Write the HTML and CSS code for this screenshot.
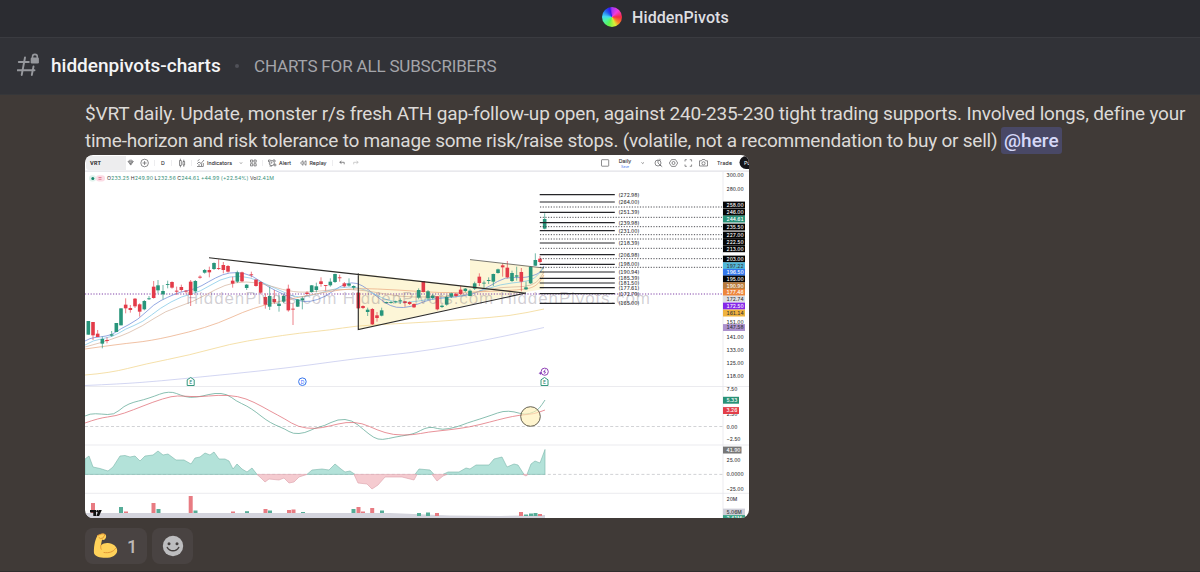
FILE: index.html
```html
<!DOCTYPE html>
<html lang="en">
<head>
<meta charset="utf-8">
<title>HiddenPivots</title>
<link rel="stylesheet" href="styles.css">
</head>
<body>
<header class="server"><span class="wheel"></span><span class="server-name">HiddenPivots</span></header>
<div class="channel">
  <svg class="hash" viewBox="0 0 24 24" width="24" height="24"><path d="M8 4.5 4.7 22M16.5 13.5 14.8 22M1.8 9h10M.5 17.3h17" fill="none" stroke="#96989d" stroke-width="1.9" stroke-linecap="round"/><path d="M15.5 5V3.8a2.4 2.4 0 0 1 4.8 0V5" fill="none" stroke="#96989d" stroke-width="1.6"/><rect x="13.7" y="4.5" width="8.2" height="6" rx="1.2" fill="#96989d"/></svg>
  <h1 class="channel-name">hiddenpivots-charts</h1>
  <span class="dot"></span>
  <span class="topic">CHARTS FOR ALL SUBSCRIBERS</span>
</div>
<main class="message">
  <p class="text"><span class="line first">$VRT daily. Update, monster r/s fresh ATH gap-follow-up open, against 240-235-230 tight trading supports. Involved longs, define your</span><br><span class="line">time-horizon and risk tolerance to manage some risk/raise stops. (volatile, not a recommendation to buy or sell)</span> <span class="mention">@here</span></p>
  <section class="attachment">
    <svg id="chart" class="chart" viewBox="85 155 664 363" width="664" height="363">
      <g class="toolbar">
        <path d="M89 156h37v14H89q-3 0-3-3v-8q0-3 3-3" fill="#ededee"/>
        <text x="90" y="165.1" textLength="11" class="strong">VRT</text>
        <g class="ico">
          <path d="M128.2 161.5l1.3-1.3h2.4l1.3 1.3-2.5 3.6zM128.2 161.7h5M129.7 161.7l1 2.5 1-2.5"/>
          <circle cx="144.6" cy="163" r="3.8"/><path d="M142.6 163h4M144.6 161v4"/>
          <path d="M179.5 160.5h1.8v5h-1.8zM180.4 158.7v1.8M180.4 165.5v1.8M183 161.5h1.6v3.5H183zM183.8 159.7v1.8M183.8 165v1.8"/>
          <path d="M197 166.5h6.5M197 164l2-2 2 1.5 3-3.5M197.5 161l2-1.5M199 166v-2M201.5 166v-2.5M203.3 166v-3"/>
          <path d="M240 162.5l1 1 1-1M250.5 160h2.2v2.2h-2.2zM254 160h2.2v2.2H254zM250.5 163.7h2.2v2.2h-2.2zM254 163.7h2.2v2.2H254z"/>
          <path d="M268.5 160v2M268.5 160h2M275 160v2M275 160h-2M269.5 166h2.5M273.5 165h3M275 163.5v3"/><circle cx="271.8" cy="163" r="2.6"/><path d="M271.8 161.3v1.8h-1.5"/>
          <path d="M303 160.7v4.6l-2.5-2.3zM306 160.7v4.6l-2.5-2.3zM341.5 161l-1.8 1.3 1.8 1.3M339.9 162.3h4.3v2"/>
          <path class="pale" d="M356.5 161l1.8 1.3-1.8 1.3M358 162.3h-4.3v2"/>
          <rect x="601.5" y="159.7" width="7.2" height="6.5" rx=".5"/><path d="M641.5 162.5l1.2 1 1.2-1"/>
          <circle cx="658" cy="163" r="3"/><path d="M660.2 165.2l2 1.5M658 160v3l3 3M659.5 158.8l1 1.4"/>
          <path d="M671.5 159.6h4l2.2 3.4-2.2 3.4h-4l-2.2-3.4z"/><circle cx="673.5" cy="163" r="1.5"/>
          <path d="M685 161.5v-1.8h1.8M689.8 159.7h1.8v1.8M685 164.5v1.8h1.8M689.8 166.3h1.8v-1.8"/>
          <path d="M699.5 160.8h2l.8-1.3h2.4l.8 1.3h2v5.2h-8z"/><circle cx="703.5" cy="163.3" r="1.6"/>
        </g>
        <path class="tooldiv" d="M154.5 160v6M171.5 160v6M191.5 160v6M262.5 160v6M332.5 160v6"/>
        <text x="161" y="165">D</text><text x="207" y="165" textLength="25">Indicators</text><text x="279" y="165" textLength="12">Alert</text><text x="309.5" y="165" textLength="17">Replay</text>
        <text x="618.7" y="163.3" textLength="12.5">Daily</text><text x="621" y="167.7" class="save">Save</text><text x="717" y="165" textLength="15">Trade</text>
        <path d="M749 156h-3a6.5 6.5 0 0 0 0 13h3z" fill="#151519"/><text x="744" y="165" class="on-dark">Pu</text>
        <path d="M85 171.2h664" stroke="#e2e2e7" stroke-width="1.2"/>
      </g>
      <rect x="89" y="175.3" width="7" height="6.2" rx="3" fill="#e0f2ec"/><rect x="96" y="175.3" width="9" height="6.2" rx="3" fill="#fbdce5"/><circle cx="92.8" cy="178.4" r="1.5" fill="#16866d"/><path d="M98.5 177.5h3M98.5 179.3h3" stroke="#e05d7b" stroke-width=".7"/>
      <text x="107" y="180.4" textLength="167" class="quote"><tspan>O</tspan>233.25 <tspan>H</tspan>249.90 <tspan>L</tspan>232.56 <tspan>C</tspan>244.61 +44.99 (+22.54%) <tspan>Vol</tspan>2.41M</text>
      <path d="M358.5 273.5L470 286.5V260L544 268V289L520 293L358.5 329.5z" fill="#fdf6d7"/>
      <path d="M85 294H723" stroke="#8042a8" stroke-width="1" stroke-dasharray="1.2 1.6"/>
      <g id="averages" class="avg"></g>
      <g id="candles"></g>
      <text class="watermark" x="186" y="303.5" textLength="464" xml:space="preserve">HiddenPivots.com HiddenPivots.com HiddenPivots.com</text>
      <path d="M209 257.8L526 293.2M358.3 273.5V329.5L526 293" fill="none" stroke="#2d2c29" stroke-width="1.15"/>
      <path d="M470 259.6L544 268" stroke="#57554c" stroke-width=".8"/>
      <g id="levels"></g>
      <path d="M723 172V518M85 386.5H749M85 445H749M85 493.3H749" stroke="#e6e6eb" stroke-width=".8"/>
      <path d="M85 426.5H723M85 474.4H723" stroke="#bfc0c4" stroke-width=".7" stroke-dasharray="3 2.2"/>
      <g id="axis"></g>
      <g fill="#fff" stroke-width="1"><path d="M187.2 385.5v-5.7l3.5-2.3 3.5 2.3v5.7z" stroke="#35987f"/><path d="M541 385.5v-5.7l3.5-2.3 3.5 2.3v5.7z" stroke="#35987f"/><circle cx="302.4" cy="381.7" r="3.8" stroke="#3876ed"/><circle cx="544.7" cy="371.7" r="3.6" stroke="#9145b7"/></g>
      <path d="M545.4 369.5l-2 2.5h2.4l-1.6 2.2M539.2 373.3l1.2-1.2 1.2 1.2-1.2 1.2z" fill="#7c3ac0" stroke="#9145b7" stroke-width=".5"/>
      <g class="badge"><text x="189.2" y="383.7">E</text><text x="543" y="383.7">E</text><text x="300.7" y="383.5" class="dividend">D</text></g>
      <g id="studies"></g>
      <circle cx="530.5" cy="416.5" r="9.8" fill="#fff0b5" fill-opacity=".65" stroke="#55503f" stroke-width=".9"/>
      <path d="M90 510h6v6h-2.7v-3.5H90zM98.8 510h3l-2.7 6h-2.8z" fill="#111"/><circle cx="97.5" cy="511.3" r="1.2" fill="#111"/>
    </svg>
  </section>
  <div class="reactions">
    <button class="reaction"><svg width="26" height="26" viewBox="0 0 26 26"><path d="M4.5 2.5 8.5 1c2-.5 4.2.2 4.5 1.6.5 1.8-.4 3.6-2 4.3L9 6.7l-1.1 5.5c2-1.6 4.5-2.4 7-2.2 5 .3 9.3 3.5 9.3 7.4 0 4.6-5.2 7.4-11.7 7.4C6.7 24.8 2 23.5 1 20.3.7 15 1.3 8.5 4.5 2.5z" fill="#ffd25a"/><path d="M4.5 2.5 8.5 1c1.3-.3 2.6-.1 3.5.5L10 5 7.5 5.6 6 4.5M7.9 12.2c-.4 1.6-.3 2.9.3 4M11 19.5c5 .7 9-.3 11.5-4" fill="none" stroke="#e39836" stroke-width="1" stroke-linecap="round"/></svg><span>1</span></button>
    <button class="reaction add"><svg width="22" height="22" viewBox="0 0 22 22"><circle cx="11" cy="11" r="10.2" fill="#bdbdbf"/><circle cx="7" cy="8.7" r="1.5" fill="#443f3e"/><circle cx="15" cy="8.7" r="1.5" fill="#443f3e"/><path d="M5.3 12.5c2.2 4.3 9.2 4.3 11.4 0" fill="none" stroke="#443f3e" stroke-width="1.5" stroke-linecap="round"/></svg></button>
  </div>
</main>
<script src="chart.js"></script>
</body>
</html>
```
FILE: styles.css
```css
* { box-sizing: border-box; }
body { margin: 0; height: 572px; overflow: hidden; background: #403a37; font-family: Roboto, "Noto Sans", sans-serif; display: flex; flex-direction: column; }
.server { height: 38px; background: #2b2c31; border-bottom: 1px solid #3a3b40; display: flex; align-items: flex-start; padding: 7px 0 0 602px; gap: 10px; flex: none; }
.wheel { width: 20px; height: 20px; border-radius: 50%; background: conic-gradient(#a336f0, #f23cdd 12%, #f52b45 25%, #f98227 36%, #dcef37 44%, #5df34f 57%, #4bf2ac 68%, #42d7f5 76%, #235aed 88%, #3516ef 96%, #a336f0); }
.server-name { color: #dedfe2; font-size: 16px; line-height: 21px; font-weight: 500; letter-spacing: .1px; }
.channel { height: 57px; background: #313237; border-bottom: 1px solid #36373a; display: flex; align-items: center; flex: none; padding-left: 17px; }
.hash { margin-top: -2px; }
.channel-name { margin: 0 0 0 10px; font-size: 19px; font-weight: 500; line-height: 24px; color: #f5f5f6; width: 169px; white-space: nowrap; }
.dot { width: 4px; height: 4px; border-radius: 50%; background: #505158; margin: 0 15px; }
.topic { color: #a4a5aa; font-size: 17px; letter-spacing: -.17px; white-space: nowrap; line-height: 24px; }
.message { flex: 1; padding: 5px 0 0 85px; border-bottom: 1px solid #302d2d; }
.text { margin: 0; font-size: 19px; line-height: 27px; color: #dddad8; white-space: nowrap; height: 55px; }
.line { letter-spacing: -.235px; }
.line.first { letter-spacing: -.172px; }
.mention { background: #494866; color: #d6d8f8; border-radius: 3px; padding: 2px 3px; margin-left: -1px; font-weight: 500; letter-spacing: 0; }
.attachment { width: 664px; height: 363px; border-radius: 8px; overflow: hidden; background: #fff; }
.chart { display: block; }
.chart text { font-family: Inter, "Liberation Sans", sans-serif; font-size: 5.2px; fill: #38383b; font-feature-settings: "tnum"; }
.chart .strong { font-weight: 600; fill: #222; }
.toolbar text { stroke: #38383b; stroke-width: .12px; }
.chart .save { font-size: 3.5px; fill: #477bed; stroke: none; }
.ico { fill: none; stroke: #5b5b5f; stroke-width: .7px; }
.ico .pale { stroke: #bbb; }
.tooldiv { stroke: #e1e1e4; stroke-width: .6px; }
.chart .quote { font-size: 5.2px; fill: #3a927b; }
.quote tspan { fill: #333; }
#axis text, #levels text { font-size: 4.9px; font-weight: 500; }
.chart .watermark { font-family: "Liberation Sans", sans-serif; font-size: 17px; fill: #5e5369; fill-opacity: .28; }
.chart text.on-dark { fill: #fff; stroke: none; }
.chart .badge text { font-size: 5px; fill: #23826b; }
.chart .badge .dividend { fill: #2962ff; }
.avg { fill: none; }
.reactions { display: flex; gap: 5px; margin-top: 10px; }
.reaction { height: 36px; width: 62px; padding: 0 2px 0 0; border: 0; border-radius: 8px; background: #494342; display: flex; align-items: center; justify-content: center; gap: 8px; color: #bdb9b8; font: 500 18px Roboto, sans-serif; }
.reaction.add { width: 41px; padding: 0; }
```
FILE: chart.js
```js
const ns = 'http://www.w3.org/2000/svg';
const GREEN = '#28957b', RED = '#e33b49';
function add(parent, tag, attrs, text) {
  const el = document.createElementNS(ns, tag);
  for (const key in attrs) el.setAttribute(key, attrs[key]);
  if (text) el.textContent = text;
  document.getElementById(parent).appendChild(el);
  return el;
}
// Each row: centre, body top, body bottom, wick top, wick bottom, rising.
const groups = [
  [84, 240, [[13,243,284,243,284,1],[27,246,286,246,300,0],[41,281,291,270,291,0],[55,297,311,290,325,1],[69,300,303,292,310,0],[83,283,287,273,290,1],[97,249,276,249,276,1],[111,205,256,205,256,1],[125,194,205,175,220,0],[139,204,210,195,218,0],[153,176,199,174,204,0],[167,193,215,190,230,0],[181,183,208,180,211,1],[195,175,177,168,180,1],[209,140,174,123,176,0],[222,136,151,120,160,1],[237,153,163,135,178,1],[251,132,134,122,145,1],[264,126,143,124,146,0],[278,152,155,140,165,0],[292,141,150,134,155,0],[306,152,154,150,160,0],[320,125,165,120,198,0],[334,123,154,120,158,1],[348,110,113,106,116,0],[362,90,98,87,101,1],[376,90,97,80,112,0],[390,69,87,67,90,1],[404,84,86,58,90,0],[418,75,90,66,100,0],[432,78,95,75,98,0],[446,122,131,110,143,0],[460,97,125,92,129,1],[474,97,124,95,126,0],[488,134,144,132,150,1],[502,103,105,95,112,0],[516,119,138,117,140,0],[530,126,158,124,163,0],[544,171,194,160,206,0],[557,168,200,140,210,1],[571,177,186,150,192,0],[585,191,198,165,215,1],[599,168,185,164,189,1]]],
  [270, 240, [[55,146,211,134,215,0],[69,206,208,190,255,0],[83,178,200,177,201,1],[97,175,181,170,208,1],[111,158,162,154,163,0],[125,136,156,135,158,1],[139,139,150,128,157,1],[153,124,132,112,140,0],[167,135,137,135,152,0],[181,125,136,115,140,1],[195,102,126,101,129,1],[209,112,114,104,125,0],[223,130,139,126,142,0],[237,131,137,115,140,1],[251,138,143,136,149,1],[265,158,205,158,207,0],[279,198,204,196,207,0],[293,209,216,203,228,1],[307,207,253,204,255,0],[321,226,234,216,245,0],[335,211,227,203,229,1],[349,186,188,185,190,1],[363,186,188,183,191,1],[377,184,187,182,190,1],[391,181,184,175,192,1],[405,184,189,183,200,0],[419,186,192,184,195,0],[432,192,202,190,204,0],[446,150,173,145,178,1],[460,123,156,123,157,0],[474,154,175,150,180,1],[488,167,174,162,178,1],[502,169,208,168,211,0],[516,197,201,193,204,1],[530,171,194,166,197,1]]],
  [450, 180, [[4,340,350,338,354,1],[18,341,348,340,352,0],[32,329,342,318,345,0],[46,326,333,324,337,1],[60,332,348,328,349,1],[74,310,326,305,330,1],[88,290,309,280,318,0],[102,308,310,302,325,1],[116,300,303,292,312,1],[130,282,305,281,318,1],[144,268,279,266,281,1],[158,256,262,250,290,0],[172,263,292,243,295,0],[186,279,303,272,306,1],[200,286,290,260,302,1],[214,276,305,264,334,0],[228,322,328,305,330,1],[242,260,310,258,312,1],[256,240,257,220,258,1],[270,236,246,228,250,0],[284,117,146,100,148,1]]]
];
for (const [ox, oy, rows] of groups) for (const [x, top, bottom, high, low, up] of rows) {
  const color = up ? GREEN : RED, cx = ox + x / 3;
  add('candles', 'path', { d: `M${cx} ${oy + high / 3}V${oy + low / 3}`, stroke: color, 'stroke-width': .65 });
  add('candles', 'rect', { x: cx - 1.8, y: oy + top / 3, width: 3.6, height: Math.max(.9, (bottom - top) / 3), fill: color });
}
function curve(parent, points, color, width) {
  let d = `M${points[0]}`;
  for (let i = 1; i < points.length - 1; i++) {
    const [x, y] = points[i], [nx, ny] = points[i + 1];
    d += `Q${x} ${y} ${(x + nx) / 2} ${(y + ny) / 2}`;
  }
  d += `L${points.at(-1)}`;
  add(parent, 'path', { d, fill: 'none', stroke: color, 'stroke-width': width || .75 });
}
curve('averages', [[85,341],[90,338],[100,337],[112,335],[120,329],[138,320],[154,304],[168,297],[180,292],[196,289],[208,282],[223,274],[236,272],[252,275],[268,287],[283,294],[298,301],[310,302],[325,297],[340,286],[352,282],[362,285],[374,294],[385,303],[396,308],[411,307],[425,301],[438,298],[456,297],[474,294],[490,286],[505,277],[522,278],[532,276],[540,273],[544,266]], '#6f8bd8');
curve('averages', [[85,345],[93,340],[113,337],[125,329],[143,322],[160,308],[182,296],[200,292],[220,279],[240,275],[260,281],[283,292],[298,298],[318,294],[340,287],[358,287],[375,294],[388,301],[407,303],[430,299],[455,297],[475,293],[501,284],[523,282],[535,279],[544,267]], '#81c8e7');
curve('averages', [[85,347],[115,339],[143,326],[165,311],[193,302],[216,289],[234,282],[258,282],[283,290],[304,293],[335,289],[365,290],[400,297],[430,297],[458,296],[478,292],[501,287],[525,287],[537,283],[544,272]], '#cda58b', .6);
curve('averages', [[85,349],[120,344],[150,341],[190,332],[219,323],[243,312],[264,305],[290,299],[325,292],[355,288],[400,290],[440,293],[475,292],[520,290],[536,287],[544,275]], '#eaa67c', .7);
curve('averages', [[85,375],[110,373],[145,364],[190,355],[230,344],[265,338],[300,333],[330,330],[355,326],[390,324],[430,322],[468,319],[510,316],[544,309]], '#f1d58e');
curve('averages', [[85,385.5],[120,384],[160,381],[210,376],[260,371],[310,365],[360,358],[410,353],[460,345],[510,335],[544,327.5]], '#c4c8ed');
[[44,272.98],[66,264],[97,251.39],[128,239.98],[152,231],[189,218.39],[224,206.98],[253,198],[276,190.94],[295,185.39],[309,181.50],[323,177.61],[341,172.79],[370,165]].forEach(([y, price]) => {
  const py = 180 + y / 3;
  add('levels', 'path', { d: `M539.7 ${py}H614.8`, stroke: '#252529', 'stroke-width': 1.1 });
  add('levels', 'text', { x: 618.4, y: py + 2.1 }, `(${price.toFixed(2)})`);
});
[171,202,230,254,267,295,326,352].forEach(y => add('levels', 'path', { d: `M540 ${150 + y / 3}H723`, stroke: '#33333a', 'stroke-width': .85, 'stroke-dasharray': '1.2 1.5' }));
[[174.7,'300.00'],[189.5,'280.00'],[205,'258.00','#050505'],[212.2,'246.00','#050505'],[219,'244.61','#299277'],[227,'235.50','#050505'],[235,'227.00','#050505'],[241.7,'222.50','#050505'],[248.7,'213.00','#050505'],[259,'203.00','#050505'],[265.7,'197.22','#51b8da',1],[272.3,'196.50','#3478ed'],[279,'195.00','#050505'],[285.7,'190.90','#b97b3d'],[292.3,'177.46','#ed863c'],[299,'172.74','#dedee3',1],[322.5,'151.00'],[306,'172.50','#8628e8'],[313,'161.14','#efb33e',1],[327.5,'147.58','#ac91ce',1],[337.5,'141.00'],[350.2,'133.00'],[363.5,'125.00'],[376,'118.00'],[389.5,'7.50'],[414,'2.50'],[400.2,'5.33','#299277'],[410.5,'3.26','#e33e49'],[426.7,'0.00'],[439,'−2.50'],[450,'41.90','#777'],[460,'25.00'],[474.5,'0.0000'],[489,'−25.00'],[499,'20M'],[512,'5.06M','#cfcfd9',1],[518.5,'2.41M','#3aa184']].forEach(([y, label, fill, dark]) => {
  const short = y > 395 && y < 455;
  if (fill) add('axis', 'rect', { x: 723, y: y - 3.4, width: short ? (y > 440 ? 18.5 : 16) : 22, height: 6.9, fill });
  add('axis', 'text', { x: 726.5, y: y + 1.8, class: fill && !dark ? 'on-dark' : '' }, label);
});
curve('studies', [[85,416],[90,413.5],[101,414],[114,415],[124,406],[134,402],[143,400],[155,396],[164,392.5],[173,392],[180,395],[190,398],[203,396],[215,393],[227,394],[236,401],[247,406],[256,412],[266,420],[275,425],[285,429],[293,434],[305,433],[315,428],[324,426],[338,419],[352,420],[364,430],[374,438],[382,440],[395,437],[408,435],[416,433],[425,428],[433,427],[442,430],[457,427],[467,423],[480,419],[492,415],[503,411],[514,411.5],[525,415],[534,412],[539,409],[545,400]], '#61aa97');
curve('studies', [[85,423],[99,418],[116,416],[133,410],[153,402],[172,396],[183,396],[199,397],[218,395],[238,396],[254,402],[270,411],[285,419],[298,427],[315,429],[330,426],[346,422],[362,423],[377,430],[393,435],[413,435],[428,432],[448,430],[470,427],[490,422],[505,418],[520,415],[534,414],[545,410]], '#e06d77');
const greenAreas = [
  '85 474.4 85 459 89 456 93 467 100 468.5 108 471 113 467 120 456 125 455.5 130 457 135 456 140 461 145 456 153 455 158 451 163 455 168 454 176 460 184 460 191 464 195 458 200 457 205 453 210 455 214 452 219 459 225 459 229 461 233 469 237 464 242 469 247 472 252 468 257 474.4',
  '307 474.4 312 470 322 469 329 470 335 464 341 469 345 472 350 471 355 474.4',
  '415 474.4 419 469 430 470 434 474.4', '443 474.4 448 472 459 472 466 468 470 469 476 465 489 465 494 459 502 457 507 467 514 464 518 465 524 474.4',
  '527 474.4 531 464 535 461 540 463 545 449.5 545 474.4'
];
greenAreas.forEach(points => add('studies', 'polygon', { points, fill: '#b3e2d9', stroke: '#7bb6a9', 'stroke-width': .6 }));
['257 474.4 261 478 265 482 269 479 279 480 284 478 289 483 294 482 299 477 307 474.4','354 474.4 358 483 367 484 372 489 378 485 385 477 402 477 414 480 417 474.4','432 474.4 437 481 443 476 447 474.4','523 474.4 526 476 528 474.4'].forEach(points => add('studies', 'polygon', { points, fill: '#f5cbd0', stroke: '#dba0a9', 'stroke-width': .6 }));
add('studies', 'path', { d: 'M85 513H190L390 513 450 515.5 500 516 545 515V518H85z', fill: '#d4d4dd' });
[[93,503,0],[121,507,1],[126,511.5,0],[153.5,503,0],[158.5,509,1],[190.7,496,0],[195.5,510.5,1],[233,511.5,0],[247,511.2,1],[265.5,509,0],[270,510.5,1],[289,510,0],[293.5,509.5,0],[303,512,1],[353.5,509,1],[358.5,507,0],[363,511.5,0],[372.2,508,0],[382,510.5,1],[419,513,1],[428,512.5,1],[437,513,0],[521,512,0],[526,514.5,1],[531,513.5,1],[535.5,513,1],[540,514,0]].forEach(([x,y,up]) => add('studies', 'rect', { x: x - 2, y, width: 4, height: (y > 511 && x > 400 ? 516 : 513) - y, fill: up ? '#56ad98' : '#e87b82' }));
```
